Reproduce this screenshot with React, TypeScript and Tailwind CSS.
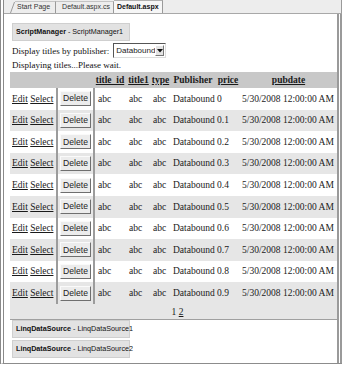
import React from "react";

const serif = { fontFamily: '"Liberation Serif", "Times New Roman", serif' };
const sans = { fontFamily: '"Liberation Sans", Arial, sans-serif' };

const rows = Array.from({ length: 10 }, (_, i) => (i === 0 ? "Databound 0" : `Databound 0.${i}`));

function CtlBox({ bold, name }: { bold: string; name: string }) {
  return (
    <div
      className="flex items-center h-[18px] w-[118px] bg-[#e2e2e2] border border-[#cfcfcf] pl-[3px] text-[7.2px] text-[#111] whitespace-nowrap"
      style={sans}
    >
      <span className="font-bold">{bold}</span>
      <span>&nbsp;- {name}</span>
    </div>
  );
}

export default function App() {
  return (
    <div className="w-[343px] h-[367px] bg-white overflow-hidden">
      <div className="w-[342px] h-[364px] border-l-[4px] border-double border-l-[#8a8a8a] border-b border-b-[#8c8c8c] flex flex-col">
        {/* tab strip */}
        <div
          className="h-[14px] shrink-0 bg-[#ededed] border-b border-b-[#a8a8a8] border-r border-r-[#9a9a9a] flex items-end text-[7px] text-[#333]"
          style={sans}
        >
          <div className="ml-[6px] flex items-end h-[12px]">
            <svg width="5" height="12" viewBox="0 0 5 12" className="block">
              <path d="M0.5 12 L4.5 1" stroke="#9a9a9a" strokeWidth="1" fill="none" />
            </svg>
            <div className="h-[12px] flex items-center pl-[2px] pr-[5px] border-t border-t-[#c4c4c4] border-r border-r-[#9a9a9a]">
              Start Page
            </div>
            <div className="h-[12px] flex items-center pl-[6px] pr-[3px] border-t border-t-[#c4c4c4] border-r border-r-[#9a9a9a]">
              Default.aspx.cs
            </div>
            <div className="h-[13px] flex items-center pl-[3px] pr-[3px] bg-[#f6f6f6] border-t border-t-[#b0b0b0] border-r border-r-[#9a9a9a] font-bold text-[#111]">
              Default.aspx
            </div>
          </div>
        </div>

        {/* design surface */}
        <div className="flex-1 border-r-[5px] border-double border-r-[#9a9a9a] overflow-hidden">
          <div className="pt-[9px] pl-[8px]">
            <CtlBox bold="ScriptManager" name="ScriptManager1" />
          </div>

          <div className="pl-[8px] pt-[1px] h-[17px] flex items-end text-[9px] text-[#111]" style={serif}>
            <span className="leading-[11px] pb-[1px]">Display titles by publisher:</span>
            <div className="ml-[4px] h-[15px] w-[53px] flex items-stretch border border-t-[#555] border-l-[#555] border-r-[#ddd] border-b-[#ddd] bg-white">
              <span className="flex-1 pl-[2px] text-[8px] leading-[13px] text-[#222]" style={sans}>
                Databound
              </span>
              <span className="w-[10px] my-[1px] mr-[1px] bg-[#e4e4e4] border border-t-white border-l-white border-r-[#777] border-b-[#777] flex items-center justify-center">
                <svg width="6" height="4" viewBox="0 0 6 4">
                  <path d="M0 0 L6 0 L3 3.5 Z" fill="#111" />
                </svg>
              </span>
            </div>
          </div>

          <div className="pl-[8px] h-[14px] text-[9px] leading-[14px] text-[#111]" style={serif}>
            Displaying titles...Please wait.
          </div>

          <table
            className="ml-[6px] w-[327px] table-fixed border-collapse text-[9.5px] text-[#1a1a1a]"
            style={serif}
          >
            <colgroup>
              <col className="w-[47px]" />
              <col className="w-[37px]" />
              <col className="w-[32px]" />
              <col className="w-[25px]" />
              <col className="w-[19px]" />
              <col className="w-[46px]" />
              <col className="w-[24px]" />
              <col className="w-[97px]" />
            </colgroup>
            <thead>
              <tr className="h-[16px] bg-[#c8c8c8]">
                <th></th>
                <th></th>
                <th className="font-bold underline whitespace-nowrap text-center px-0">title_id</th>
                <th className="font-bold underline whitespace-nowrap text-center px-0">title1</th>
                <th className="font-bold underline whitespace-nowrap text-center px-0">type</th>
                <th className="font-bold whitespace-nowrap text-center px-0">Publisher</th>
                <th className="font-bold underline whitespace-nowrap text-center px-0">price</th>
                <th className="font-bold underline whitespace-nowrap text-center px-0">pubdate</th>
              </tr>
            </thead>
            <tbody>
              {rows.map((pub, i) => (
                <tr key={pub} className={i % 2 === 1 ? "h-[21.6px] bg-[#e6e6e6]" : "h-[21.6px] bg-white"}>
                  <td className="pl-[2px] whitespace-nowrap">
                    <span className="underline">Edit</span> <span className="underline">Select</span>
                  </td>
                  <td className="border-x-2 border-x-[#9c9c9c] p-0">
                    <div
                      className="mx-auto w-[31px] h-[15px] flex items-center justify-center bg-[#ececec] border border-t-[#fafafa] border-l-[#fafafa] border-r-[#6f6f6f] border-b-[#6f6f6f] text-[8.6px] text-[#222]"
                      style={sans}
                    >
                      Delete
                    </div>
                  </td>
                  <td className="pl-[3px]">abc</td>
                  <td className="pl-[3px]">abc</td>
                  <td className="pl-[2px]">abc</td>
                  <td className="pl-[3px] whitespace-nowrap">{pub}</td>
                  <td></td>
                  <td className="pl-[2px] whitespace-nowrap">5/30/2008 12:00:00 AM</td>
                </tr>
              ))}
              <tr className="h-[16px] bg-[#e6e6e6] border-b border-b-[#a0a0a0]">
                <td colSpan={8} className="text-center">
                  <span className="pl-[8px]">1 </span>
                  <span className="underline">2</span>
                </td>
              </tr>
            </tbody>
          </table>

          <div className="pl-[8px] flex flex-col gap-[2px]">
            <CtlBox bold="LinqDataSource" name="LinqDataSource1" />
            <CtlBox bold="LinqDataSource" name="LinqDataSource2" />
          </div>
        </div>
      </div>
    </div>
  );
}
